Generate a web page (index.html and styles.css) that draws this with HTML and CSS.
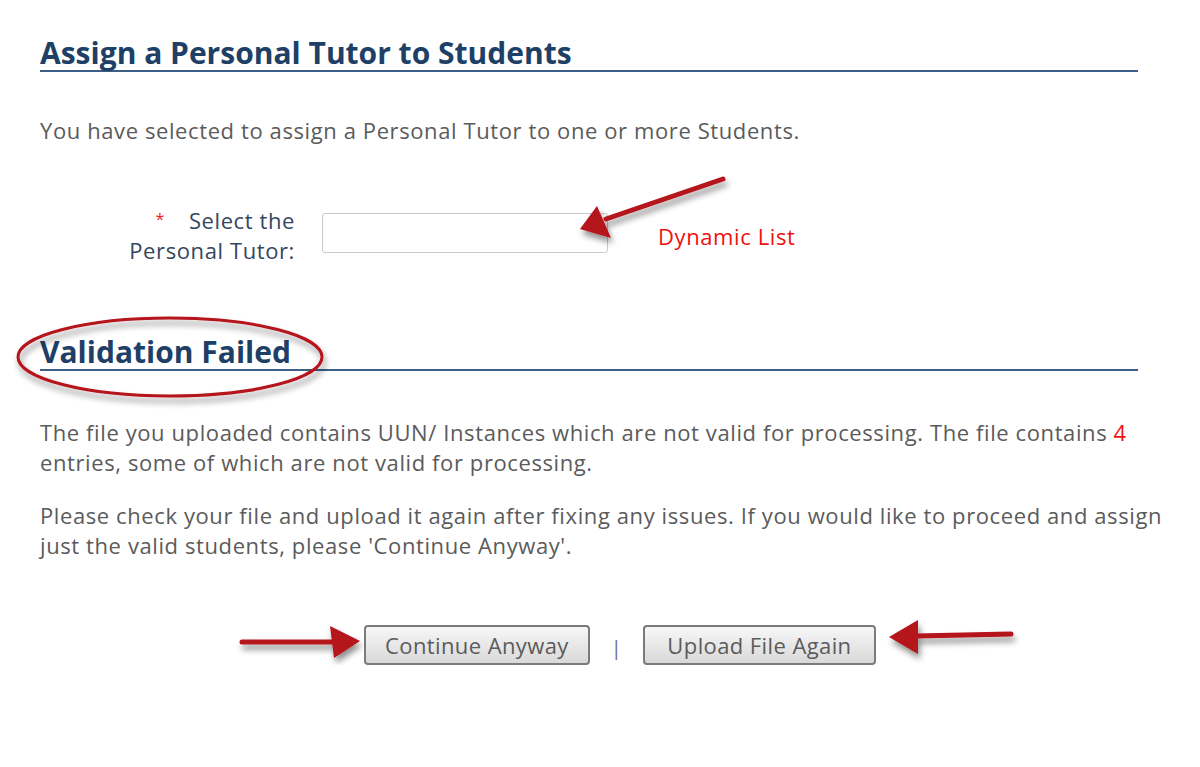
FILE: index.html
```html
<!DOCTYPE html>
<html lang="en">
<head>
<meta charset="utf-8">
<title>Assign a Personal Tutor to Students</title>
<link rel="stylesheet" href="styles.css">
</head>
<body>
<main class="page">
  <h1 class="section-title">Assign a Personal Tutor to Students</h1>
  <p class="intro">You have selected to assign a Personal Tutor to one or more Students.</p>

  <div class="form-row">
    <label class="field-label" for="tutor"><span class="req">*</span>Select the<br>Personal Tutor:</label>
    <input class="field-input" id="tutor" type="text">
    <span class="note">Dynamic List</span>
  </div>

  <h2 class="section-title failed">Validation Failed</h2>
  <p class="msg">The file you uploaded contains UUN/ Instances which are not valid for processing. The file contains <span class="count">4</span> entries, some of which are not valid for processing.</p>
  <p class="msg second">Please check your file and upload it again after fixing any issues. If you would like to proceed and assign just the valid students, please 'Continue Anyway'.</p>

  <div class="actions">
    <button class="btn" type="button">Continue Anyway</button>
    <span class="sep">|</span>
    <button class="btn btn-wide" type="button">Upload File Again</button>
  </div>

  <svg class="annot" width="1200" height="767" viewBox="0 0 1200 767" aria-hidden="true">
    <defs>
      <filter id="sh" x="-20%" y="-20%" width="140%" height="160%">
        <feGaussianBlur in="SourceAlpha" stdDeviation="3"/>
        <feOffset dx="2" dy="5" result="b"/>
        <feComponentTransfer><feFuncA type="linear" slope="0.45"/></feComponentTransfer>
        <feMerge><feMergeNode/><feMergeNode in="SourceGraphic"/></feMerge>
      </filter>
    </defs>
    <g filter="url(#sh)" fill="#b5121b" stroke="#b5121b">
      <!-- arrow to input -->
      <line x1="723" y1="179" x2="606" y2="219" stroke-width="5" stroke-linecap="round"/>
      <polygon points="580,229 597,206 611,238" stroke="none"/>
      <!-- left arrow -->
      <line x1="242" y1="642" x2="335" y2="642" stroke-width="5" stroke-linecap="round"/>
      <polygon points="360,641 330,626 334,658" stroke="none"/>
      <!-- right arrow -->
      <line x1="1011" y1="634" x2="916" y2="636" stroke-width="5" stroke-linecap="round"/>
      <polygon points="889,637 918,620 918,654" stroke="none"/>
      <!-- ellipse -->
      <ellipse cx="170" cy="357" rx="152" ry="39" fill="none" stroke-width="3"/>
    </g>
  </svg>
</main>
</body>
</html>
```

FILE: styles.css
```css
html, body {
  margin: 0;
  padding: 0;
  background: #ffffff;
}

.page {
  position: relative;
  width: 1140px;
  padding: 36px 0 0 40px;
  font-family: "Open Sans", "DejaVu Sans", sans-serif;
  color: #5b5b5b;
  font-size: 22px;
  letter-spacing: 0.6px;
}

.section-title {
  margin: 0 42px 0 0;
  font-size: 30px;
  line-height: 34px;
  font-weight: 700;
  color: #203f67;
  border-bottom: 2px solid #3d5f86;
  letter-spacing: 0;
}

.intro {
  margin: 43px 0 0;
  line-height: 30px;
}

.form-row {
  display: flex;
  align-items: flex-start;
  margin-top: 59px;
}

.field-label {
  width: 255px;
  text-align: right;
  line-height: 30px;
  color: #34475f;
}

.req {
  color: #e8232a;
  font-size: 16px;
  margin-right: 24px;
  vertical-align: 4px;
}

.field-input {
  margin: 9px 0 0 27px;
  width: 286px;
  height: 40px;
  box-sizing: border-box;
  border: 1px solid #c9c9c9;
  border-radius: 3px;
  background: #fff;
}

.note {
  margin: 17px 0 0 50px;
  line-height: 30px;
  color: #f01010;
}

.failed {
  margin-top: 70px;
}

.msg {
  margin: 46px 0 0;
  line-height: 30px;
}

.msg.second {
  margin-top: 23px;
}

.count {
  color: #f01010;
}

.actions {
  display: flex;
  align-items: center;
  margin: 65px 0 0 324px;
}

.btn {
  height: 40px;
  padding: 0 19px;
  font-family: inherit;
  font-size: 22px;
  letter-spacing: 0.4px;
  color: #5b5b5b;
  background: linear-gradient(#f7f7f7, #d9d9d9);
  border: 2px solid #7b7b7b;
  border-radius: 4px;
}

.btn-wide {
  padding: 0 22px;
}

.sep {
  margin: 4px 21px 0;
  color: #6a6a7a;
  font-size: 20px;
}

.annot {
  position: absolute;
  left: 0;
  top: 0;
  pointer-events: none;
}
```
